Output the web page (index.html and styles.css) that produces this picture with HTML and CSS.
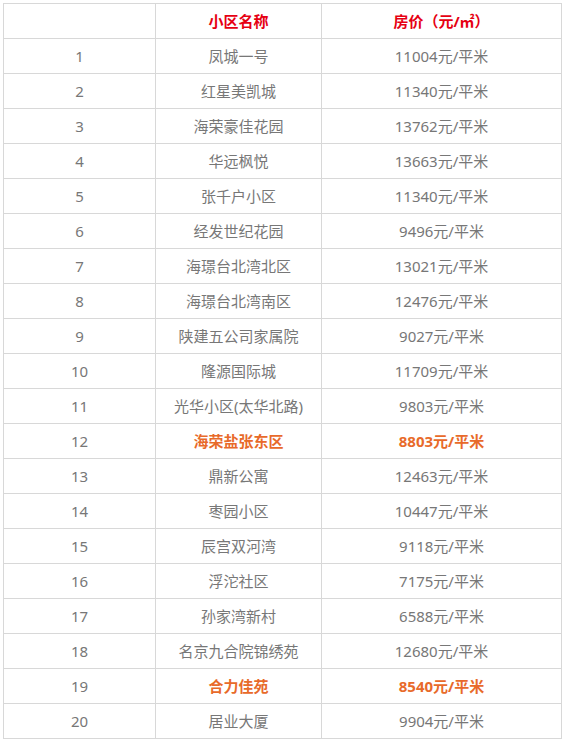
FILE: index.html
```html
<!DOCTYPE html>
<html lang="zh">
<head>
<meta charset="utf-8">
<link rel="stylesheet" href="styles.css">
</head>
<body>
<table class="price-table">
  <colgroup>
    <col class="c1"><col class="c2"><col class="c3">
  </colgroup>
  <thead>
    <tr><th></th><th>小区名称</th><th>房价（元/㎡）</th></tr>
  </thead>
  <tbody>
    <tr><td>1</td><td>凤城一号</td><td>11004元/平米</td></tr>
    <tr><td>2</td><td>红星美凯城</td><td>11340元/平米</td></tr>
    <tr><td>3</td><td>海荣豪佳花园</td><td>13762元/平米</td></tr>
    <tr><td>4</td><td>华远枫悦</td><td>13663元/平米</td></tr>
    <tr><td>5</td><td>张千户小区</td><td>11340元/平米</td></tr>
    <tr><td>6</td><td>经发世纪花园</td><td>9496元/平米</td></tr>
    <tr><td>7</td><td>海璟台北湾北区</td><td>13021元/平米</td></tr>
    <tr><td>8</td><td>海璟台北湾南区</td><td>12476元/平米</td></tr>
    <tr><td>9</td><td>陕建五公司家属院</td><td>9027元/平米</td></tr>
    <tr><td>10</td><td>隆源国际城</td><td>11709元/平米</td></tr>
    <tr><td>11</td><td>光华小区(太华北路)</td><td>9803元/平米</td></tr>
    <tr class="hl"><td>12</td><td>海荣盐张东区</td><td>8803元/平米</td></tr>
    <tr><td>13</td><td>鼎新公寓</td><td>12463元/平米</td></tr>
    <tr><td>14</td><td>枣园小区</td><td>10447元/平米</td></tr>
    <tr><td>15</td><td>辰宫双河湾</td><td>9118元/平米</td></tr>
    <tr><td>16</td><td>浮沱社区</td><td>7175元/平米</td></tr>
    <tr><td>17</td><td>孙家湾新村</td><td>6588元/平米</td></tr>
    <tr><td>18</td><td>名京九合院锦绣苑</td><td>12680元/平米</td></tr>
    <tr class="hl"><td>19</td><td>合力佳苑</td><td>8540元/平米</td></tr>
    <tr><td>20</td><td>居业大厦</td><td>9904元/平米</td></tr>
  </tbody>
</table>
</body>
</html>
```
FILE: styles.css
```css
html, body {
  margin: 0;
  padding: 0;
  background: #fff;
}
body {
  padding: 3px 0 0 3px;
  font-family: "Noto Sans", "Noto Sans CJK SC", sans-serif;
  font-size: 15px;
  color: #777;
}
.price-table {
  border-collapse: collapse;
  table-layout: fixed;
  width: 558px;
}
.c1 { width: 152px; }
.c2 { width: 166px; }
.c3 { width: 240px; }
.price-table th,
.price-table td {
  border: 1px solid #d8d8d8;
  height: 34px;
  padding: 0;
  text-align: center;
  vertical-align: middle;
  line-height: 20px;
  font-weight: normal;
}
.price-table th {
  color: #e60012;
  font-weight: bold;
}
.price-table tr.hl td {
  color: #e86a2a;
  font-weight: bold;
}
.price-table tr.hl td:first-child {
  color: #777;
  font-weight: normal;
}
```
